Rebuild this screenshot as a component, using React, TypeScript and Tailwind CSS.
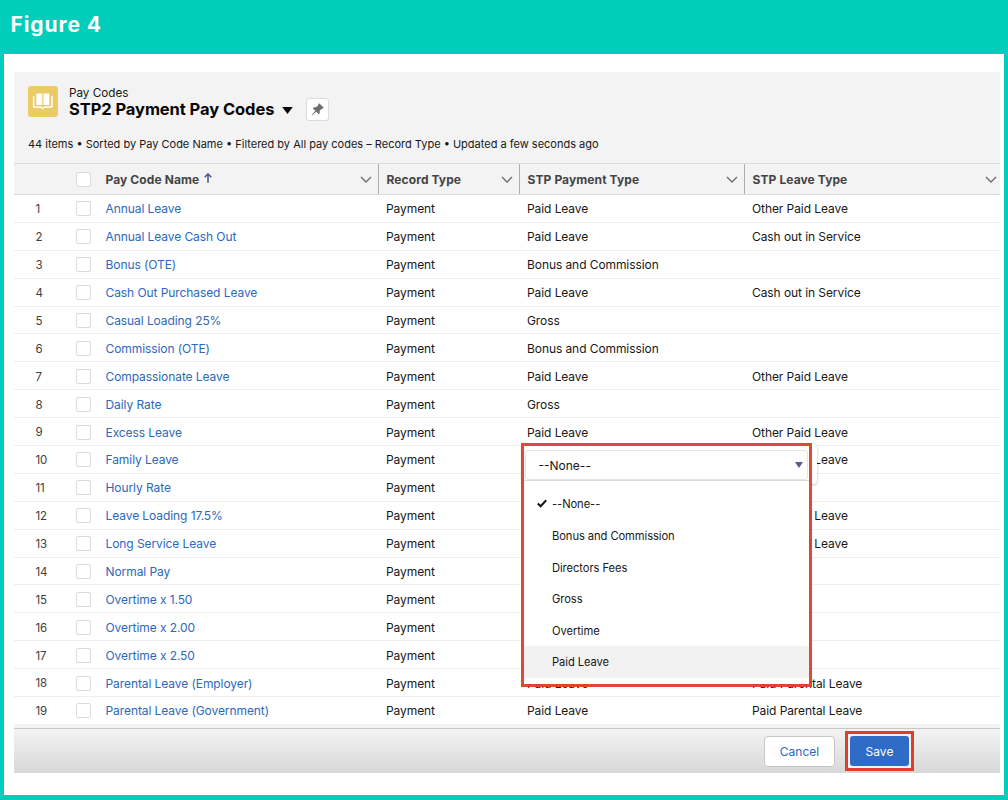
interface PayCode {
  name: string;
  payment: string;
  leave?: string;
}

const payCodes: PayCode[] = [
  { name: 'Annual Leave', payment: 'Paid Leave', leave: 'Other Paid Leave' },
  { name: 'Annual Leave Cash Out', payment: 'Paid Leave', leave: 'Cash out in Service' },
  { name: 'Bonus (OTE)', payment: 'Bonus and Commission' },
  { name: 'Cash Out Purchased Leave', payment: 'Paid Leave', leave: 'Cash out in Service' },
  { name: 'Casual Loading 25%', payment: 'Gross' },
  { name: 'Commission (OTE)', payment: 'Bonus and Commission' },
  { name: 'Compassionate Leave', payment: 'Paid Leave', leave: 'Other Paid Leave' },
  { name: 'Daily Rate', payment: 'Gross' },
  { name: 'Excess Leave', payment: 'Paid Leave', leave: 'Other Paid Leave' },
  { name: 'Family Leave', payment: '', leave: 'Other Paid Leave' },
  { name: 'Hourly Rate', payment: '' },
  { name: 'Leave Loading 17.5%', payment: '', leave: 'Other Paid Leave' },
  { name: 'Long Service Leave', payment: '', leave: 'Other Paid Leave' },
  { name: 'Normal Pay', payment: '' },
  { name: 'Overtime x 1.50', payment: '' },
  { name: 'Overtime x 2.00', payment: '' },
  { name: 'Overtime x 2.50', payment: '' },
  { name: 'Parental Leave (Employer)', payment: 'Paid Leave', leave: 'Paid Parental Leave' },
  { name: 'Parental Leave (Government)', payment: 'Paid Leave', leave: 'Paid Parental Leave' },
];

const options = ['--None--', 'Bonus and Commission', 'Directors Fees', 'Gross', 'Overtime', 'Paid Leave'];

const columns = 'grid grid-cols-[62px_22px_281px_141px_225px_255px]';

function BookIcon() {
  return (
    <svg viewBox="0 0 30 31" className="h-[31px] w-[30px] shrink-0">
      <rect width="30" height="31" rx="3" fill="#ebcb66" />
      <rect x="8.3" y="7.6" width="5.9" height="11.4" rx="0.6" fill="#fff" />
      <rect x="15.4" y="7.6" width="5.9" height="11.4" rx="0.6" fill="#fff" />
      <path d="M5.6 10.5v10.4h7.2c.5 0 .8 1.3 2 1.3s1.500-1.300 2-1.300H24V10.500" fill="none" stroke="#fff" strokeWidth="1.5" strokeLinejoin="round" strokeLinecap="round" />
    </svg>
  );
}

function PinIcon() {
  return (
    <svg viewBox="0 0 14 14" className="size-[13px]" fill="#706e6b">
      <path d="M8.200.9c.3-.5.8-.5 1.200-.1l3.800 3.800c.4.400.4.900-.1 1.200-.7.400-1.300.2-1.800.6L9.300 8.600c.3 1.100.2 2.100-.3 2.900-.3.500-.7.500-1.100.100L5.600 9.300 1.300 13.100c-.3.200-.7-.1-.4-.4l3.800-4.300L2.400 6.100c-.4-.4-.4-.8.1-1.100.8-.5 1.800-.6 2.900-.3l2.200-2c.4-.5.2-1.100.6-1.800z" />
    </svg>
  );
}

function HeaderCell({ label, sorted }: { label: string; sorted?: boolean }) {
  return (
    <div className="flex items-center border-r border-[#b0adab] pr-[6px] pl-[7.500px] last:border-r-0 last:pr-[3px]">
      <span className="pt-px text-[12px] font-bold tracking-[0.1px] text-[#444]">{label}</span>
      {sorted && (
        <svg viewBox="0 0 8 10" className="mb-[2px] ml-[5px] h-[10px] w-[8px]" fill="none" stroke="#4d5b8c" strokeWidth="1.6">
          <path d="M4 9.800V1.200M.7 4.200 4 1l3.300 3.200" />
        </svg>
      )}
      <svg viewBox="0 0 12 7" className="ml-auto h-[7px] w-[12px]" fill="none" stroke="#706e6b" strokeWidth="1.4">
        <path d="M1 1l5 5 5-5" />
      </svg>
    </div>
  );
}

function Checkbox() {
  return <span className="block size-[15px] rounded-[2px] border border-[#dddbda] bg-white" />;
}

function PaymentTypePicker() {
  return (
    <>
      <div className="absolute top-[444px] left-[522px] h-[40px] w-[295px] rounded-[4px] bg-white shadow-[0_1px_3px_rgba(0,0,0,0.25)]" />
      <div className="absolute top-[443px] left-[521px] h-[244px] w-[291px] border-[3px] border-[#dd4029]/95 bg-white bg-clip-padding text-[#181818]">
        <div className="mx-px mt-[4px] flex h-[30px] items-center justify-between rounded-[3px] border border-[#e5e5e5] pr-[4px] pl-[12.500px]">
          <span className="pt-[2px] text-[12px]">--None--</span>
          <svg viewBox="0 0 8 6" className="mb-px h-[6px] w-[8px]" fill="#54618c">
            <path d="M0 0h8L4 6z" />
          </svg>
        </div>
        <ul className="border-t border-[#dddbda] pt-[7px]">
          {options.map((option) => (
            <li
              key={option}
              className="flex h-[31.6px] items-center pt-[2px] pl-[28px] text-[11.2px] tracking-[-0.08px] last:bg-[#f3f2f2]"
            >
              {option === '--None--' && (
                <svg viewBox="0 0 10 9" className="mr-[5px] mb-[2px] -ml-[15px] h-[9px] w-[10px]" fill="none" stroke="#181818" strokeWidth="2">
                  <path d="M.8 4.500 3.600 7.200 9.200 1.200" />
                </svg>
              )}
              {option}
            </li>
          ))}
        </ul>
      </div>
    </>
  );
}

export default function App() {
  return (
    <div className="relative flex h-[800px] w-[1008px] flex-col overflow-hidden bg-[#00cebb] px-[4px] pb-[5px] font-['Inter','Liberation_Sans',sans-serif]">
      <h1 className="h-[54px] shrink-0 pl-[6.500px] text-[21px] leading-[50px] font-bold tracking-[0.9px] text-white">Figure 4</h1>

      <main className="flex-1 bg-white pt-[18px] pr-[4px] pl-[10px]">
        <header className="h-[91px] bg-[#f3f3f3] pt-[14px] pl-[14px]">
          <div className="flex h-[36px]">
            <BookIcon />
            <div className="ml-[11px]">
              <p className="h-[13px] text-[11.7px] leading-[15px] text-[#181818]">Pay Codes</p>
              <div className="flex h-[20px] items-center">
                <h2 className="text-[16.5px] leading-[18px] font-bold tracking-[-0.08px] text-[#080707]">STP2 Payment Pay Codes</h2>
                <svg viewBox="0 0 12 8" className="mt-[2px] ml-[8px] h-[7px] w-[11px]" fill="#080707">
                  <path d="M0 0h12L6 8z" />
                </svg>
                <button className="ml-[13px] flex size-[23px] shrink-0 items-center justify-center rounded-[3px] border border-[#dddbda] bg-white">
                  <PinIcon />
                </button>
              </div>
            </div>
          </div>
          <p className="mt-[14px] text-[11px] leading-[17px] text-[#181818]">
            44 items • Sorted by Pay Code Name • Filtered by All pay codes – Record Type • Updated a few seconds ago
          </p>
        </header>

        <section className="h-[561px] overflow-hidden">
          <div className={`${columns} h-[32px] border-y border-[#dddbda] bg-[#f3f3f3]`}>
            <span />
            <div className="flex items-center">
              <Checkbox />
            </div>
            <HeaderCell label="Pay Code Name" sorted />
            <HeaderCell label="Record Type" />
            <HeaderCell label="STP Payment Type" />
            <HeaderCell label="STP Leave Type" />
          </div>
          {payCodes.map((code, i) => (
            <div
              key={code.name}
              className={`${columns} h-[27.9px] items-center border-b border-[#eeeeee] text-[12px] tracking-[-0.08px] text-[#181818]`}
            >
              <span className="pt-[3px] pl-[21.500px] text-[11.5px] text-[#3e3e3c]">{i + 1}</span>
              <span className="pt-px">
                <Checkbox />
              </span>
              <a className="pt-[2px] pl-[7.500px] text-[#2b69be]">{code.name}</a>
              <span className="pt-[2px] pl-[7px]">Payment</span>
              <span className="pt-[2px] pl-[7px]">{code.payment}</span>
              <span className="pt-[2px] pl-[7px]">{code.leave}</span>
            </div>
          ))}
        </section>

        <footer className="h-[49px] bg-[#f3f3f3] pt-[4px] text-[12px]">
          <div className="flex h-[45px] border-t border-[#c9c7c5] bg-linear-to-b from-[#f3f3f3] to-[#d8d8d8] pt-[2px]">
            <button className="mt-[5px] ml-[750px] h-[31px] w-[71px] rounded-[4px] border border-[#c9c7c5] bg-white pt-px text-[#2b69be]">Cancel</button>
            <div className="ml-[10px] h-[40px] w-[69px] border-[3px] border-[#dd4029] bg-[#f3f3f3] p-[2px]">
              <button className="h-[30px] w-[59px] rounded-[3px] bg-[#2f6cc8] pt-px text-white">Save</button>
            </div>
          </div>
        </footer>
      </main>

      <PaymentTypePicker />
    </div>
  );
}
